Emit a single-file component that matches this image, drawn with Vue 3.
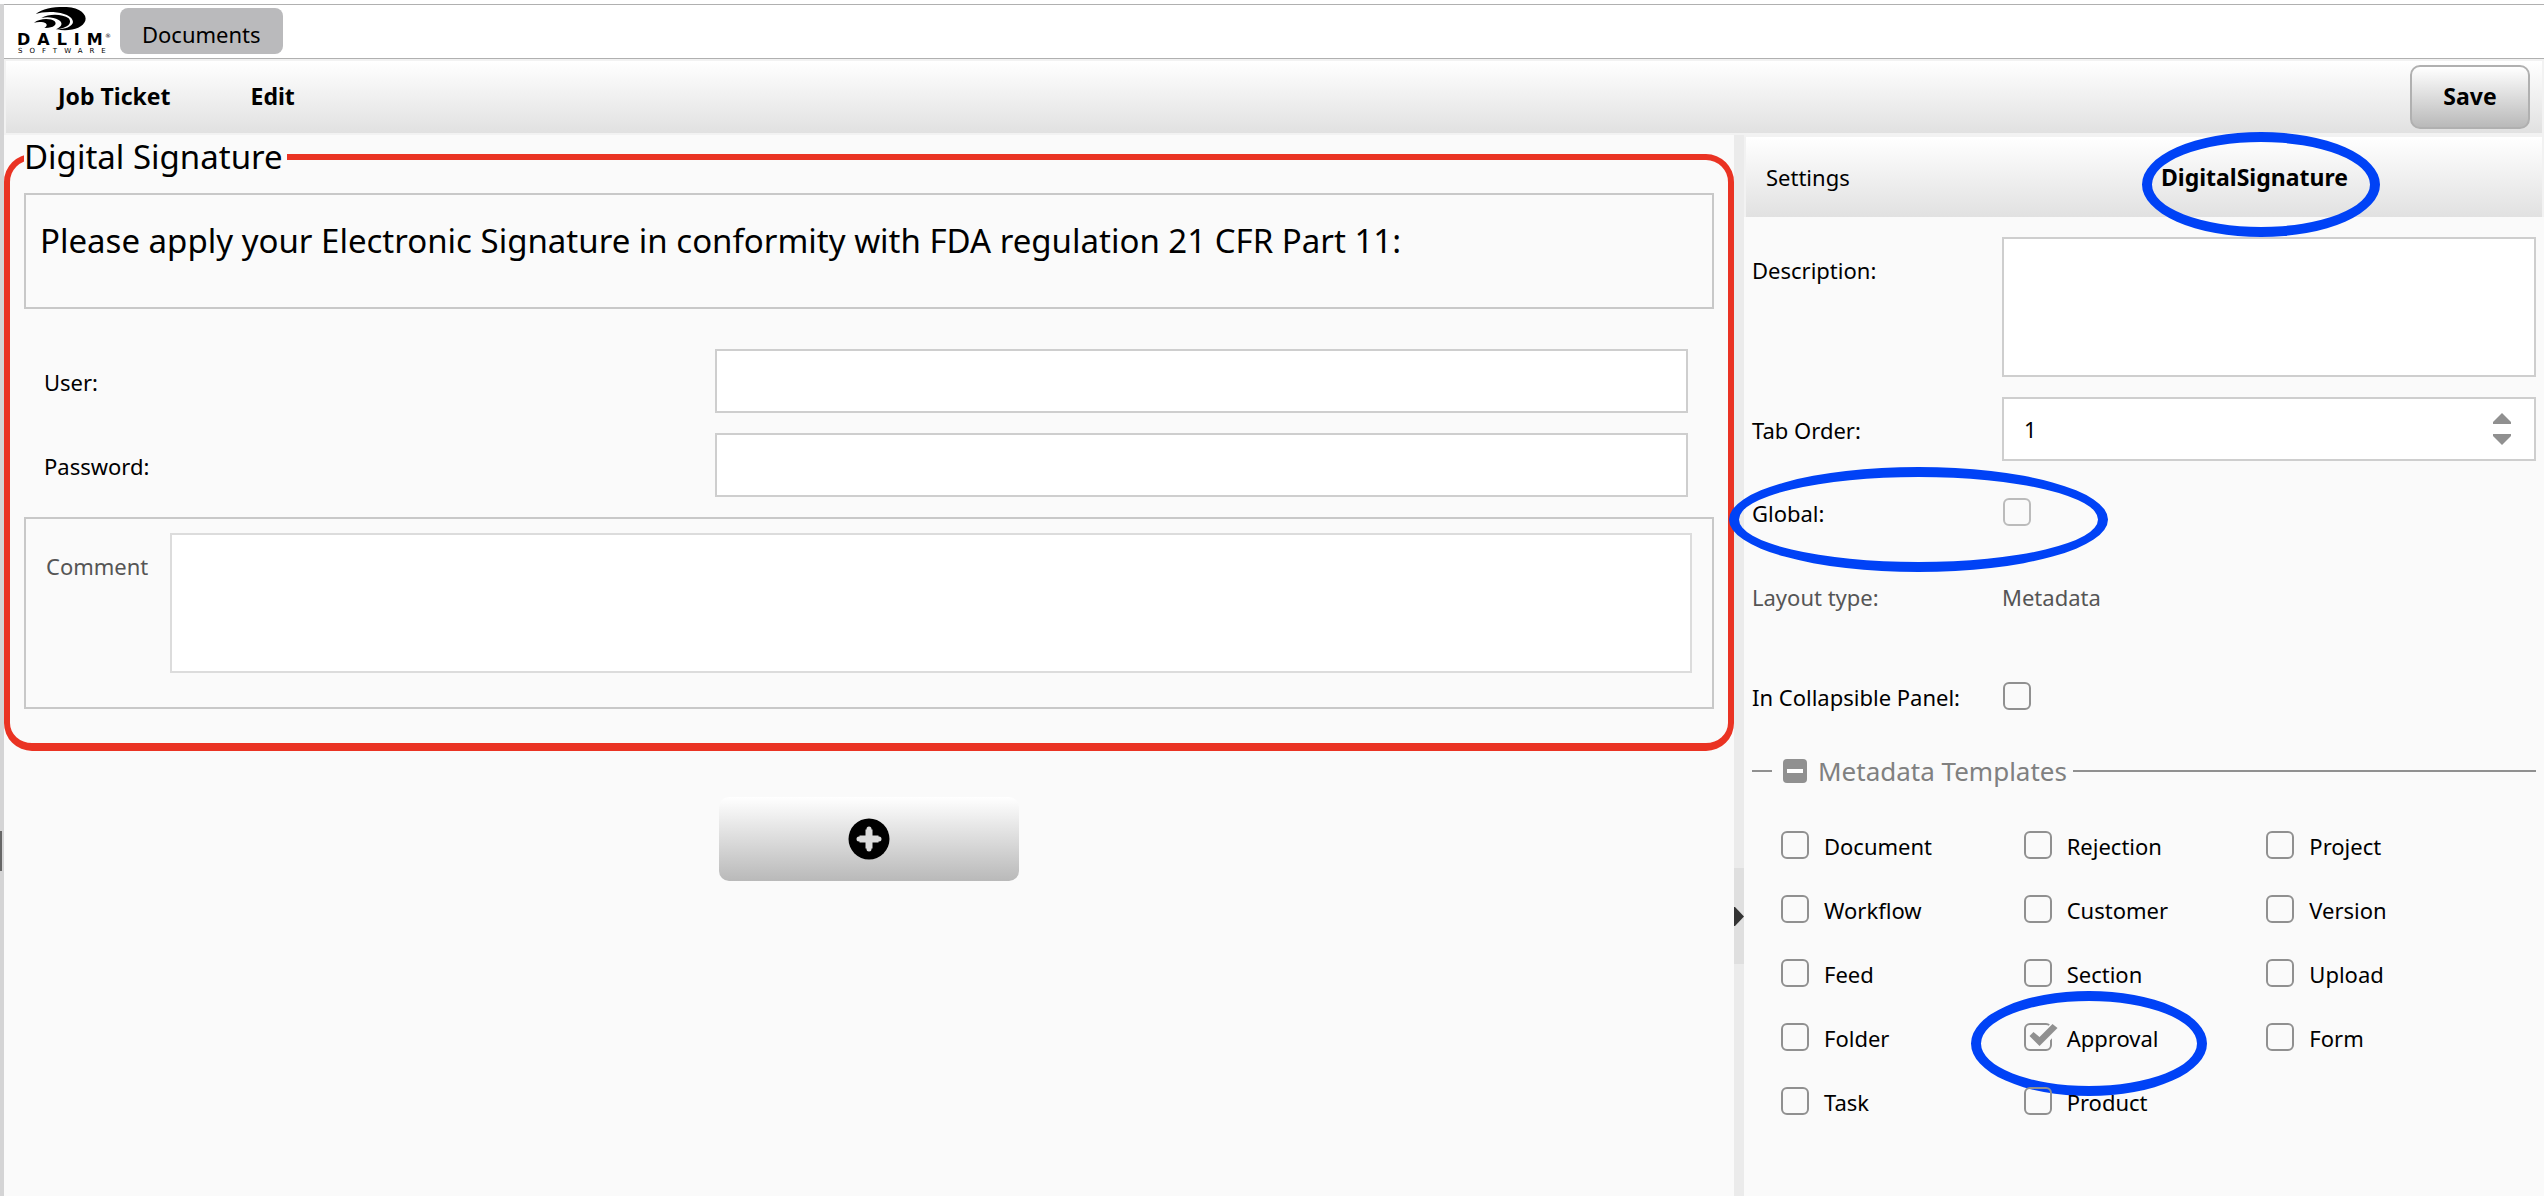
<script setup>
import { ref } from 'vue'

const tabOrder = ref('1')
const templates = ref([
  { name: 'Document', checked: false },
  { name: 'Rejection', checked: false },
  { name: 'Project', checked: false },
  { name: 'Workflow', checked: false },
  { name: 'Customer', checked: false },
  { name: 'Version', checked: false },
  { name: 'Feed', checked: false },
  { name: 'Section', checked: false },
  { name: 'Upload', checked: false },
  { name: 'Folder', checked: false },
  { name: 'Approval', checked: true, marked: true },
  { name: 'Form', checked: false },
  { name: 'Task', checked: false },
  { name: 'Product', checked: false },
])

function step(amount) {
  tabOrder.value = String(Number(tabOrder.value) + amount)
}
</script>

<template>
  <div class="app">
    <div class="edge"><span class="edge-mark"></span></div>
    <div class="page">
      <header class="brand-bar">
        <svg class="logo" viewBox="0 0 96 50" role="img" aria-label="Dalim Software">
          <g transform="translate(-16 -5) scale(0.3333)">
            <path d="M107 42 C128 24 165 20 200 21 C240 23 262 44 256 62 C248 84 212 96 168 88 C196 88 217 80 219 66 C219 48 190 38 160 36 C138 35 120 37 107 42 Z" />
            <path d="M124 54 C148 40 188 42 206 55 C218 68 204 86 168 88 C186 80 190 68 176 60 C162 52 142 50 124 54 Z" />
            <path d="M102 68 C120 54 152 54 164 64 C173 74 160 85 133 84 C144 78 142 70 130 67 C120 65 110 66 102 68 Z" />
          </g>
          <text class="logo-name" x="1" y="40">DALIM</text>
          <text class="logo-sub" x="2" y="48">SOFTWARE</text>
          <text class="logo-reg" x="89" y="33">®</text>
        </svg>
        <button class="tab" type="button">Documents</button>
      </header>

      <nav class="toolbar">
        <button class="menu" type="button">Job Ticket</button>
        <button class="menu" type="button">Edit</button>
        <button class="save" type="button">Save</button>
      </nav>

      <main class="columns">
        <section class="form-pane">
          <fieldset class="signature">
            <legend>Digital Signature</legend>
            <p class="notice">Please apply your Electronic Signature in conformity with FDA regulation 21 CFR Part 11:</p>
            <div class="credentials">
              <label for="user">User:</label>
              <input id="user" class="field" type="text" />
              <label for="password">Password:</label>
              <input id="password" class="field" type="password" />
            </div>
            <div class="comment">
              <label for="comment">Comment</label>
              <textarea id="comment" class="field area"></textarea>
            </div>
          </fieldset>
          <button class="add" type="button" aria-label="Add">
            <svg width="42" height="42" viewBox="0 0 42 42">
              <circle cx="21" cy="21" r="20.5" />
              <path d="M21 11.5v19M11.5 21h19" fill="none" stroke="#dcdcdc" stroke-width="7" />
              <path d="M21 11v20M11 21h20" fill="none" stroke="#dcdcdc" stroke-width="5" stroke-linecap="round" />
            </svg>
          </button>
        </section>

        <div class="splitter">
          <button class="grip" type="button" aria-label="Collapse settings">
            <svg width="10" height="20" viewBox="0 0 10 20"><path d="M0 1h1l9 9.500l-9 9.500h-1z" fill="#333" /></svg>
          </button>
        </div>

        <aside class="settings">
          <div class="settings-head">
            <span>Settings</span>
            <strong class="object-name">DigitalSignature<i class="ring ring-title"></i></strong>
          </div>

          <div class="rows">
            <label class="top-label" for="description">Description:</label>
            <textarea id="description" class="field area"></textarea>

            <label class="field-label" for="order">Tab Order:</label>
            <div class="field spinner">
              <input id="order" v-model="tabOrder" type="text" />
              <div class="arrows">
                <button type="button" aria-label="Increase" @click="step(1)">
                  <svg width="18" height="11" viewBox="0 0 18 11"><path d="M9 0l9 9v2h-18v-2z" fill="#909090" /></svg>
                </button>
                <button type="button" aria-label="Decrease" @click="step(-1)">
                  <svg width="18" height="11" viewBox="0 0 18 11"><path d="M9 11l9-9v-2h-18v2z" fill="#909090" /></svg>
                </button>
              </div>
            </div>
          </div>

          <div class="rows line global">
            <label for="global">Global:</label>
            <span class="check"><input id="global" type="checkbox" disabled /></span>
            <i class="ring ring-global"></i>
          </div>
          <div class="rows line muted">
            <span>Layout type:</span>
            <span>Metadata</span>
          </div>
          <div class="rows line collapsible">
            <label for="collapsible">In Collapsible Panel:</label>
            <span class="check"><input id="collapsible" type="checkbox" /></span>
          </div>

          <section class="templates">
            <h2>
              <button class="collapse" type="button" aria-label="Collapse"></button>
              <span>Metadata Templates</span>
            </h2>
            <ul>
              <li v-for="item in templates" :key="item.name">
                <label>
                  <span class="check">
                    <input v-model="item.checked" type="checkbox" />
                    <svg v-if="item.checked" class="tick" width="34" height="28" viewBox="0 0 34 28">
                      <path d="M17 19l14-15" fill="none" stroke="#fafafa" stroke-width="11" />
                      <path d="M5.500 13l4-4l6 5l13-13l5 4l-18 18z" fill="#909090" />
                    </svg>
                  </span>
                  <span>{{ item.name }}</span>
                </label>
                <i v-if="item.marked" class="ring ring-item"></i>
              </li>
            </ul>
          </section>
        </aside>
      </main>
    </div>
  </div>
</template>

<style>
body {
  margin: 0;
  background: #fafafa;
}
</style>

<style scoped>
* {
  box-sizing: border-box;
}

.app {
  display: grid;
  grid-template-columns: 4px minmax(0, 1fr);
  min-height: 100vh;
  border-top: 4px solid #fff;
  background: #fafafa;
  color: #000;
  font: 22px/30px "Noto Sans", sans-serif;
}

button,
input,
textarea {
  font: inherit;
  color: inherit;
}

button {
  padding: 0;
  border: 0;
  background: none;
}

.edge {
  display: flex;
  flex-direction: column;
  padding-top: 827px;
  background: #d4d4d5;
}

.edge-mark {
  width: 2px;
  height: 40px;
  background: #666;
}

.page {
  display: flex;
  flex-direction: column;
}

.brand-bar {
  display: flex;
  align-items: flex-start;
  height: 55px;
  border: solid #b0b0b0;
  border-width: 1px 0;
  background: #fff;
}

.logo {
  width: 96px;
  height: 50px;
  margin-left: 12px;
}

.logo-name {
  font: bold 16px "DejaVu Sans", sans-serif;
  letter-spacing: 7px;
}

.logo-sub {
  font: 7px "DejaVu Sans", sans-serif;
  letter-spacing: 7px;
}

.logo-reg {
  font: 6px "DejaVu Sans", sans-serif;
}

.tab {
  height: 46px;
  margin: 3px 0 0 8px;
  padding: 6px 22px 0;
  border-radius: 8px;
  background: #bababc;
}

.toolbar {
  display: flex;
  align-items: center;
  height: 76px;
  padding-right: 12px;
  border: 2px solid #f2f2f2;
  background: linear-gradient(#fff, #e1e1e1);
}

.menu {
  margin-left: 52px;
  padding-bottom: 2px;
  font-size: 23px;
  font-weight: bold;
}

.menu + .menu {
  margin-left: 80px;
}

.save {
  width: 120px;
  height: 64px;
  margin-left: auto;
  padding-bottom: 2px;
  border: 2px solid #b0b0b0;
  border-radius: 10px;
  background: linear-gradient(#fff, #b9b9b9);
  font-size: 23px;
  font-weight: bold;
}

.columns {
  display: grid;
  flex: 1;
  grid-template-columns: minmax(0, 173fr) 10px minmax(0, 80fr);
}

.form-pane {
  display: flex;
  flex-direction: column;
  align-items: center;
}

.signature {
  width: 100%;
  min-width: 0;
  margin: 0;
  padding: 14px 14px 34px;
  border: solid #ea3323;
  border-width: 6px 6px 8px;
  border-radius: 28px;
}

.signature legend {
  padding: 0 4px 0 0;
  font-size: 33px;
  line-height: 44px;
}

.notice {
  margin: 0;
  padding: 24px 14px 44px;
  border: 2px solid #c8c8c8;
  font-size: 33px;
  line-height: 44px;
}

.credentials {
  display: grid;
  grid-template-columns: 69fr 100fr;
  gap: 20px 0;
  align-items: center;
  margin: 40px 26px 20px 20px;
}

.credentials label,
.field-label {
  padding-top: 2px;
}

.field {
  width: 100%;
  height: 64px;
  margin: 0;
  padding: 0 20px;
  border: 2px solid #cecece;
  border-radius: 0;
  background: #fff;
  outline: none;
}

.area {
  display: block;
  height: 140px;
  resize: none;
}

.comment {
  display: grid;
  grid-template-columns: 124px 1fr;
  height: 192px;
  padding: 14px 20px;
  border: 2px solid #c8c8c8;
  color: #555;
}

.comment label,
.top-label {
  padding-top: 18px;
}

.comment .field {
  border-color: #dcdcdc;
}

.add {
  display: flex;
  align-items: center;
  justify-content: center;
  width: 300px;
  height: 84px;
  margin-top: 46px;
  border-radius: 10px;
  background: linear-gradient(#fff, #b9b9b9);
}

.splitter {
  display: flex;
  flex-direction: column;
  padding-top: 733px;
  background: #ebebeb;
}

.grip {
  display: flex;
  align-items: center;
  height: 96px;
  background: #dfdfdf;
}

.settings-head {
  display: flex;
  align-items: center;
  height: 82px;
  padding-left: 20px;
  border: solid #f2f2f2;
  border-width: 2px 2px 0;
  background: linear-gradient(#fff, #e1e1e1);
}

.object-name {
  position: relative;
  margin-left: auto;
  margin-right: 25%;
  font-size: 23px;
}

.rows {
  display: grid;
  grid-template-columns: 250px minmax(0, 1fr);
  gap: 20px 0;
  align-items: center;
  margin: 20px 8px 0;
}

.top-label {
  align-self: start;
}

.spinner {
  display: flex;
  align-items: center;
  padding-right: 23px;
}

.spinner input {
  flex: 1;
  min-width: 0;
  padding: 0;
  border: 0;
  background: none;
  outline: none;
}

.arrows {
  display: flex;
  flex-direction: column;
  gap: 10px;
}

.arrows button,
.arrows svg {
  display: block;
}

.line {
  position: relative;
  min-height: 32px;
  margin-top: 36px;
}

.muted {
  margin-top: 52px;
  color: #555;
}

.collapsible {
  margin-top: 68px;
}

.check {
  position: relative;
  display: block;
  width: 28px;
  height: 28px;
}

.line .check {
  margin: 0 0 2px 1px;
}

.check input {
  display: block;
  appearance: none;
  width: 28px;
  height: 28px;
  margin: 0;
  border: 2px solid #909090;
  border-radius: 6px;
}

.check input:disabled {
  border-color: #bbb;
}

.tick {
  position: absolute;
  top: 0;
  left: 0;
}

.templates h2 {
  display: flex;
  align-items: center;
  margin: 40px 8px 0;
  color: #808080;
  font-size: 26px;
  font-weight: normal;
  line-height: 36px;
}

.templates h2::before,
.templates h2::after {
  content: "";
  width: 20px;
  height: 2px;
  background: #909090;
}

.templates h2::after {
  flex: 1;
  margin-left: 6px;
}

.collapse {
  display: flex;
  align-items: center;
  justify-content: center;
  width: 24px;
  height: 24px;
  margin: 0 11px;
  border-radius: 4px;
  background: #909090;
}

.collapse::before {
  content: "";
  width: 16px;
  height: 4px;
  background: #fff;
}

.templates ul {
  display: grid;
  grid-template-columns: repeat(3, 1fr);
  gap: 32px 0;
  margin: 42px 35px 0 37px;
  padding: 0;
  list-style: none;
}

.templates li {
  position: relative;
}

.templates label {
  display: flex;
  gap: 15px;
  height: 32px;
}

.ring {
  position: absolute;
  border: 10px solid #0042f6;
  border-radius: 50%;
  pointer-events: none;
}

.ring-title {
  inset: -30px -32px -45px -19px;
}

.ring-global {
  top: -30px;
  left: -23px;
  width: 379px;
  height: 105px;
}

.ring-item {
  top: -32px;
  left: -53px;
  width: 236px;
  height: 105px;
}
</style>
